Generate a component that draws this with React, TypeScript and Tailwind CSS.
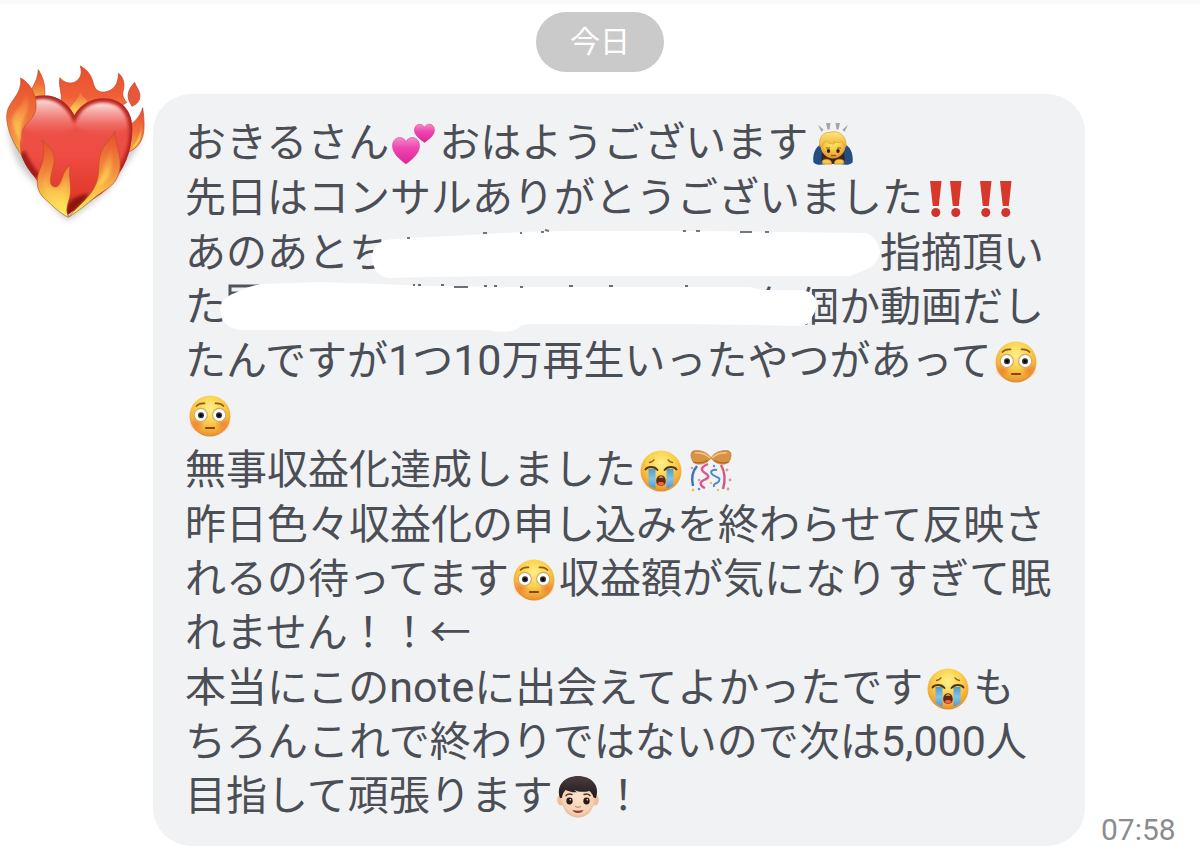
import type { ReactNode } from "react";

const EMOJI = "inline-block h-[42px] w-[50px] align-[-8px]";

function SharedGradients() {
  return (
    <svg width="0" height="0" className="absolute" aria-hidden="true">
      <defs>
        <radialGradient id="face" cx="50%" cy="32%" r="68%">
          <stop offset="0" stopColor="#fff08a" />
          <stop offset="0.5" stopColor="#fbcf4a" />
          <stop offset="0.85" stopColor="#f0a437" />
          <stop offset="1" stopColor="#dd8c34" />
        </radialGradient>
        <radialGradient id="cheek">
          <stop offset="0" stopColor="#ee6a2c" stopOpacity="0.6" />
          <stop offset="1" stopColor="#ee6a2c" stopOpacity="0" />
        </radialGradient>
        <linearGradient id="pink" x1="0" y1="0" x2="0" y2="1">
          <stop offset="0" stopColor="#f48cc9" />
          <stop offset="0.4" stopColor="#ef45b0" />
          <stop offset="1" stopColor="#dc2597" />
        </linearGradient>
        <linearGradient id="tears" x1="0" y1="0" x2="0" y2="1">
          <stop offset="0" stopColor="#4d9dd0" />
          <stop offset="0.5" stopColor="#83c3e8" />
          <stop offset="1" stopColor="#4b98cf" />
        </linearGradient>
        <radialGradient id="skin" cx="50%" cy="45%" r="60%">
          <stop offset="0" stopColor="#fbe3cc" />
          <stop offset="0.75" stopColor="#f5d1b4" />
          <stop offset="1" stopColor="#dfae8c" />
        </radialGradient>
        <linearGradient id="hair" x1="0" y1="0" x2="0" y2="1">
          <stop offset="0" stopColor="#4a3d40" />
          <stop offset="1" stopColor="#1f191b" />
        </linearGradient>
        <linearGradient id="blonde" x1="0" y1="0" x2="0" y2="1">
          <stop offset="0" stopColor="#ffe67c" />
          <stop offset="1" stopColor="#edb22f" />
        </linearGradient>
      </defs>
    </svg>
  );
}

function Flushed() {
  return (
    <svg viewBox="0 0 48 42" className={EMOJI} role="img" aria-label="😳">
      <circle cx="24" cy="21" r="20.5" fill="url(#face)" />
      <circle cx="11" cy="29" r="8" fill="url(#cheek)" />
      <circle cx="37" cy="29" r="8" fill="url(#cheek)" />
      <path d="M10.500 11c2-2.200 5-3 8-2.600M37.500 11c-2-2.200-5-3-8-2.600" fill="none" stroke="#8a5a1a" strokeWidth="1.700" strokeLinecap="round" />
      <circle cx="14.800" cy="20" r="6.600" fill="#fff" stroke="#cfa968" strokeWidth="1.200" />
      <circle cx="33.200" cy="20" r="6.600" fill="#fff" stroke="#cfa968" strokeWidth="1.200" />
      <circle cx="15" cy="20.300" r="3" fill="#32302f" />
      <circle cx="33" cy="20.300" r="3" fill="#32302f" />
      <circle cx="15" cy="20.300" r="1.500" fill="#080808" />
      <circle cx="33" cy="20.300" r="1.500" fill="#080808" />
      <path d="M20 33h8" stroke="#874514" strokeWidth="2.200" strokeLinecap="round" />
    </svg>
  );
}

function Crying() {
  return (
    <svg viewBox="0 0 48 42" className={EMOJI} role="img" aria-label="😭">
      <circle cx="24" cy="21" r="20.500" fill="url(#face)" />
      <path d="M11.500 19h7v19.800q-3.800-1.200-7-4zM36.500 19h-7v19.800q3.800-1.200 7-4z" fill="url(#tears)" />
      <path d="M12.500 12.500c1.600-.3 3.500-1.300 4.500-2.700M35.500 12.500c-1.600-.3-3.500-1.300-4.500-2.700" fill="none" stroke="#8f5c18" strokeWidth="1.300" strokeLinecap="round" />
      <path d="M8.500 19.500c2.200-3.200 9-3.500 12 .5M39.500 19.500c-2.200-3.200-9-3.500-12 .5" fill="none" stroke="#513414" strokeWidth="1.900" strokeLinecap="round" />
      <path d="M24 25.200c3 0 4.800 2.800 4.800 6 0 3-2 4.600-4.800 4.600s-4.800-1.600-4.800-4.600c0-3.200 1.800-6 4.800-6z" fill="#622812" />
      <path d="M20.500 33.500c1-2 6-2 7 0-.8 1.300-2 1.900-3.500 1.900s-2.700-.6-3.500-1.900z" fill="#ef6250" />
      <path d="M21.300 27.500q2.700-2 5.400 0z" fill="#fff" />
    </svg>
  );
}

function TwoHearts() {
  return (
    <svg viewBox="0 0 48 42" className={EMOJI} role="img" aria-label="💕">
      <path d="M16 41C10 36.500 2.500 30.500 2.500 23c0-5 3.300-8.500 7.200-8.500 3.100 0 5.300 1.900 6.300 4.300 1-2.400 3.400-4.300 6.500-4.300 4 0 7 3.600 7 8.300C29.500 30.500 22 36.500 16 41z" fill="url(#pink)" stroke="#cf2893" strokeWidth="0.500" />
      <path d="M34.600 19.500C30 16 24.500 12.600 24.500 7.200c0-3.400 2.100-6 4.900-6 2.500 0 4.200 1.300 5 3.300.9-2 2.700-3.300 5-3.300 2.900 0 5 2.600 5 5.800 0 5.600-5.300 9-9.800 12.500z" fill="url(#pink)" stroke="#cf2893" strokeWidth="0.500" />
    </svg>
  );
}

function Bowing() {
  return (
    <svg viewBox="0 0 48 42" className={EMOJI} role="img" aria-label="🙇">
      <path d="M9 2l5.500 4.500-2 2.500zM17 0h4.500l-1 6.500h-2zM26.500 0H31l-1.500 6.500h-2zM39 2l-5.500 4.500 2 2.500z" fill="#a3a6aa" />
      <path d="M11 22C5.500 25 3.500 33 4.500 39.500c3 3 8 2.500 12 1.500h15c4 1 9 1.500 12-1.500 1-6.500-1-14.500-6.500-17.500z" fill="#234e83" />
      <path d="M13 29c4 7 18 7 22 0l1 9-12 3-12-3z" fill="#342719" />
      <ellipse cx="24" cy="22" rx="12.500" ry="13.500" fill="url(#face)" />
      <path d="M11 24C9 15 14 8.500 21 9.500c8-3 17.500 3 16 14.500-2-1.500-2.600-3.500-3.500-5.500-3 1.500-6 1.500-8.800.2 1 1 1 1.700.5 2.300-4.500-.2-7.500-1.400-9-3-1 2.500-2.500 4.500-5.200 6z" fill="url(#blonde)" stroke="#d89b29" strokeWidth="0.600" />
      <path d="M17 25h4M28 25h4" stroke="#8b5517" strokeWidth="1" />
      <ellipse cx="19.500" cy="28" rx="1.700" ry="1.900" fill="#33210f" />
      <ellipse cx="29" cy="28" rx="1.700" ry="1.900" fill="#33210f" />
      <path d="M22 32.500h5" stroke="#9a4e1e" strokeWidth="1.300" />
      <path d="M13 38c2-2.500 7-2.500 9 0l1 3H13.500zM35 38c-2-2.500-7-2.500-9 0l-1 3h9.500z" fill="#f6c64a" stroke="#b77921" strokeWidth="0.700" />
    </svg>
  );
}

function DoubleBang() {
  return (
    <svg viewBox="0 0 48 42" className={EMOJI} role="img" aria-label="‼️">
      <path d="M6 3h11.500l-2.700 25H8.800zM26 3h11.500l-2.700 25h-6z" fill="#d8382a" />
      <circle cx="11.800" cy="34.500" r="4.500" fill="#cf352a" />
      <circle cx="31.800" cy="34.500" r="4.500" fill="#cf352a" />
    </svg>
  );
}

function Confetti() {
  return (
    <svg viewBox="0 0 48 42" className={EMOJI} role="img" aria-label="🎊">
      <path d="M24 8C21 2 12-.5 6 1 2.500 3 4 9 6.500 12.500 12 16 20 14 24 8z" fill="#d99146" stroke="#b97330" strokeWidth="0.600" />
      <path d="M24 8C27 2 36-.5 42 1c3.500 2 2 8-.5 11.500C36 16 28 14 24 8z" fill="#d99146" stroke="#b97330" strokeWidth="0.600" />
      <path d="M8 3c5-.5 11 1 15 5M40 3c-5-.5-11 1-15 5" fill="none" stroke="#f2c17e" strokeWidth="1.600" />
      <path d="M6.500 12c5 1.500 10 1 14-1.500M41.500 12c-5 1.500-10 1-14-1.500" fill="none" stroke="#a8662a" strokeWidth="1.300" />
      <path d="M10 16C5 22 4 28 6 36" fill="none" stroke="#3f6fb8" strokeWidth="2.400" />
      <path d="M21 14c-7 3-8 6-3 9s4 5-1 7-4 6 1 8" fill="none" stroke="#d9578c" strokeWidth="2.400" />
      <path d="M30 20c-5-1-8 2-4 5s8 2 6 6-6 1-5 6" fill="none" stroke="#4d85c9" strokeWidth="1.900" />
      <path d="M34 15c4 7 5 14 2 24" fill="none" stroke="#cf5b75" strokeWidth="2.400" />
      <g fill="#e58fae">
        <circle cx="5" cy="18" r="1.300" />
        <circle cx="40" cy="20" r="1.400" />
        <circle cx="43" cy="30" r="1.400" />
        <circle cx="12" cy="30" r="1.300" />
        <circle cx="41" cy="39" r="1.400" />
      </g>
      <g fill="#e9c44f">
        <circle cx="6" cy="40" r="1.400" />
        <circle cx="24" cy="33" r="1.200" />
        <circle cx="31" cy="40" r="1.200" />
      </g>
      <circle cx="12" cy="39" r="1.300" fill="#5b8fce" />
      <circle cx="27" cy="16" r="1.200" fill="#5b8fce" />
    </svg>
  );
}

function Boy() {
  return (
    <svg viewBox="0 0 48 42" className={EMOJI} role="img" aria-label="👦🏻">
      <ellipse cx="7" cy="24" rx="3.800" ry="5.500" fill="#eebf9c" />
      <ellipse cx="41" cy="24" rx="3.800" ry="5.500" fill="#eebf9c" />
      <path d="M7 18C7 7 14 3 24 3s17 4 17 15c0 14-6 23.500-17 23.500S7 32 7 18z" fill="url(#skin)" />
      <path d="M6 22C1.500 9 11 0 24 0s22.500 9 18 22l-2.500-.5c-.5-3-2-4.500-4-6.500-6 1.500-11 1-15-1 1 1.200 1.500 1.600 2.500 2.300-5 .2-9-1-11.500-2.300-1.800 2-3.500 5-3.500 7.800z" fill="url(#hair)" />
      <path d="M12 19.500c1.500-1.500 4-1.800 6-1M36 19.500c-1.500-1.500-4-1.800-6-1" fill="none" stroke="#4b332b" strokeWidth="1.400" strokeLinecap="round" />
      <ellipse cx="15.500" cy="25" rx="3.200" ry="3.400" fill="#2a1a15" />
      <ellipse cx="32.500" cy="25" rx="3.200" ry="3.400" fill="#2a1a15" />
      <circle cx="16.300" cy="23.800" r="0.800" fill="#fff" />
      <circle cx="33.300" cy="23.800" r="0.800" fill="#fff" />
      <path d="M21.500 30.500q2.500 1.500 5 0" fill="none" stroke="#d09474" strokeWidth="1.300" strokeLinecap="round" />
      <path d="M18.500 34q5.500 1.500 11 0c-1 4-10 4-11 0z" fill="#98362f" />
    </svg>
  );
}

function HeartOnFire() {
  return (
    <svg viewBox="0 42 459 528" className="block h-44 w-full" role="img" aria-label="❤️‍🔥">
      <defs>
        <linearGradient id="flame" x1="0" y1="0" x2="0" y2="1">
          <stop offset="0" stopColor="#ea4d2c" />
          <stop offset="0.5" stopColor="#f0703a" />
          <stop offset="1" stopColor="#f8b347" />
        </linearGradient>
        <linearGradient id="crown" x1="0" y1="0" x2="0" y2="1">
          <stop offset="0" stopColor="#ea4d2c" />
          <stop offset="0.6" stopColor="#ef6038" />
          <stop offset="1" stopColor="#f4934a" />
        </linearGradient>
        <linearGradient id="glow" x1="0" y1="0" x2="0" y2="1">
          <stop offset="0" stopColor="#f28a40" stopOpacity="0.3" />
          <stop offset="0.6" stopColor="#fbc451" />
          <stop offset="1" stopColor="#ffe95c" />
        </linearGradient>
        <linearGradient id="lowFlame" x1="0" y1="0" x2="0" y2="1">
          <stop offset="0" stopColor="#e84c2e" />
          <stop offset="0.45" stopColor="#f28a3e" />
          <stop offset="0.8" stopColor="#fad54d" />
          <stop offset="1" stopColor="#fdf06a" />
        </linearGradient>
        <linearGradient id="heart" x1="0" y1="0" x2="0" y2="1">
          <stop offset="0" stopColor="#e8564c" />
          <stop offset="0.5" stopColor="#ef4c42" />
          <stop offset="0.8" stopColor="#e23a2c" />
          <stop offset="1" stopColor="#b01e12" />
        </linearGradient>
        <linearGradient id="shine" x1="0" y1="0" x2="0" y2="1">
          <stop offset="0" stopColor="#fff" stopOpacity="0.85" />
          <stop offset="0.45" stopColor="#fbc9c8" stopOpacity="0.5" />
          <stop offset="1" stopColor="#f4918c" stopOpacity="0" />
        </linearGradient>
        <filter id="soft" x="-10%" y="-10%" width="120%" height="125%">
          <feGaussianBlur stdDeviation="9" />
        </filter>
        <filter id="edge" x="-20%" y="-20%" width="140%" height="140%">
          <feGaussianBlur stdDeviation="4" />
        </filter>
        <clipPath id="heartShape">
          <path d="M206 498C170 450 125 420 103 380 70 345 45 290 55 220c5-50 27-84 75-84 45 0 75 24 93 60 20-34 50-51 88-51 57 0 90 43 86 101-4 66-25 110-62 156-37 45-90 60-137 96z" />
        </clipPath>
      </defs>
      <path d="M25 230C35 330 75 370 108 400c25 45 60 85 97 112 55-45 130-85 160-150 35-50 60-80 55-110z" fill="#777" opacity="0.4" filter="url(#soft)" />
      <g stroke="#b5452c" strokeWidth="2">
        <path d="M88 150c-4-30 25-48 27-91 12 20 22 42 19 78z" fill="url(#flame)" />
        <path d="M180 200c-8-30 10-45 2-75-2-16-6-28-2-42 12 16 35 22 51 9 15-13 14-28 10-44 22 12 32 28 38 48 5 24 17 32 35 30 28-4 42-25 41-56 16 12 20 32 15 50-5 19 2 26 10 38L300 200z" fill="url(#crown)" />
        <path d="M404 97c-22 24-27 44-8 72 22-8 29-28 20-48-5-10-10-16-12-24z" fill="#e9573a" />
        <path d="M390 225c16-12 30-25 38-52 5 38 8 73-4 97-10 22-26 32-47 39z" fill="url(#flame)" />
      </g>
      <path d="M201 190c8-25 36-35 39-66 9 22 24 25 26 41l-25 45h-35z" fill="url(#glow)" />
      <g clipPath="url(#heartShape)">
        <path d="M30 120h390v390H30z" fill="url(#heart)" />
        <path d="M78 172C92 140 150 134 184 164c24 20 36 42 38 70-40 26-120 26-150 0z" fill="url(#shine)" filter="url(#edge)" />
        <path d="M226 226c8-50 50-70 90-68 44 2 68 34 66 76-34 28-116 26-156-8z" fill="url(#shine)" filter="url(#edge)" />
        <path d="M100 140c62-12 103 20 123 58 19-35 47-53 88-53 57 0 87 41 86 100-2 50-17 87-37 118" fill="none" stroke="#a01214" strokeWidth="18" opacity="0.75" filter="url(#edge)" />
        <path d="M60 310c12 28 25 51 48 75" fill="none" stroke="#850e09" strokeWidth="34" opacity="0.7" filter="url(#edge)" />
        <path d="M196 500c0-43 23-62 69-69-10 27-35 37-55 69z" fill="#8f120a" filter="url(#edge)" />
      </g>
      <g stroke="#b4512a" strokeWidth="2">
        <path d="M64 314C34 274 12 215 23 180c12-34 43-49 39-96 29 15 49 52 46 89-3 36-35 44-42 72-6 24-5 45-2 69z" fill="url(#flame)" />
        <path d="M206 502c-25-9-49-37-70-54-26-22-30-54-18-86 13-33 18-53 8-91 30 19 43 44 34 78-9 32-13 55-1 60 29 13 24-52 52-61-7 32 6 63-2 94-6 24-14 37-3 60z" fill="url(#lowFlame)" />
        <path d="M208 500c17-24 35-36 53-57 44-48 31-81 38-119 6-42 33-51 46-81 1 43 20 75 15 111-8 55-47 65-73 86-31 26-49 41-79 60z" fill="url(#lowFlame)" />
      </g>
      <path d="M63 280C45 240 28 217 42 193c11-21 30-27 36-63 19 42-4 67-12 91-8 23-5 37-3 59z" fill="url(#glow)" opacity="0.8" filter="url(#edge)" />
      <path d="M197 475c-31-12-71-40-67-77 2-19 16-35 19-57 5 27-16 61 8 75 31 13 38-22 44-39 7 38-13 61-4 98z" fill="url(#glow)" opacity="0.85" filter="url(#edge)" />
      <path d="M287 414c27-28 17-77 49-119 3 51 5 91-49 119z" fill="url(#glow)" opacity="0.85" filter="url(#edge)" />
      <path d="M396 295c14-20 25-37 27-74 5 37-3 58-27 74z" fill="url(#glow)" />
    </svg>
  );
}

function ScribbleTop() {
  return (
    <span className="relative inline-block h-10 w-[490px] align-[-8px]">
      <svg viewBox="370 228 520 56" width="520" height="56" className="absolute -top-2 -left-5 max-w-none" aria-hidden="true">
        <path d="M372 260Q371 247 385 241L410 239L470 236Q530 232 570 232L690 232L867 234Q878 239 880 253Q879 265 865 271L850 277H500L430 278L388 279Q374 276 372 260Z" fill="#fff" />
        <path d="M407 239h3M483 234h4M520 234h2M541 233h3M545 231l4 1M683 232h3M696 232h4M740 233h12M765 233h4" stroke="#53565c" strokeWidth="2" opacity="0.8" />
      </svg>
    </span>
  );
}

function ScribbleBottom() {
  return (
    <span className="relative inline-block h-10 w-[531px] align-[-8px]">
      <svg viewBox="216 278 610 60" width="610" height="60" className="absolute -top-3 -left-2.5 max-w-none" aria-hidden="true">
        <path d="M230 301V287H259M231 294H248" fill="none" stroke="#50545b" strokeWidth="3" />
        <path d="M220 310Q221 299 235 294Q248 287 262 285L320 283L380 285L425 287L520 288H680L750 288L762 291H803Q816 294 817 306Q815 315 811 319Q808 327 800 327L755 326L680 325H528Q521 326 517 330Q506 335 488 331L240 331Q221 328 220 310Z" fill="#fff" />
        <path d="M413 286h2M418 286h3M441 286h3M454 288h14M484 287h3M494 287h3M520 288h3M569 287h4M609 287h4M685 287h3" stroke="#53565c" strokeWidth="2" opacity="0.85" />
      </svg>
    </span>
  );
}

function Line({ children }: { children: ReactNode }) {
  return <span className="block whitespace-nowrap">{children}</span>;
}

function Latin({ children }: { children: ReactNode }) {
  return <span className="text-[43px] leading-none">{children}</span>;
}

export default function App() {
  return (
    <main className="min-h-screen overflow-x-hidden border-t-4 border-[#f9f9fa] bg-white font-[Roboto,'Noto_Sans_CJK_JP',sans-serif]">
      <SharedGradients />
      <header className="flex justify-center pt-2">
        <time className="rounded-full bg-[#cacaca] px-[34px] text-[30px] leading-[60px] text-white">今日</time>
      </header>
      <article className="-mt-2 flex">
        <div className="w-[153px] shrink-0">
          <HeartOnFire />
        </div>
        <div className="mt-[30px] min-w-0 flex-1 space-y-px rounded-[38px] bg-[#f1f2f4] pt-[22px] pr-3 pb-[23px] pl-8 text-[41px] leading-[54px] text-[#4b4e54]">
          <p>
            <Line>おきるさん<TwoHearts />おはようございます<Bowing /></Line>
          </p>
          <p>
            <Line>先日はコンサルありがとうございました<DoubleBang /><DoubleBang /></Line>
          </p>
          <p>
            <Line>あのあとち<ScribbleTop />指摘頂い</Line>
            <Line>た<ScribbleBottom />何個か動画だし</Line>
            <Line>たんですが<Latin>1</Latin>つ<Latin>10</Latin>万再生いったやつがあって<Flushed /></Line>
            <Line><Flushed /></Line>
          </p>
          <p>
            <Line>無事収益化達成しました<Crying /><Confetti /></Line>
          </p>
          <p>
            <Line>昨日色々収益化の申し込みを終わらせて反映さ</Line>
            <Line>れるの待ってます<Flushed />収益額が気になりすぎて眠</Line>
            <Line>れません！！←</Line>
          </p>
          <p>
            <Line>本当にこの<Latin>note</Latin>に出会えてよかったです<Crying />も</Line>
            <Line>ちろんこれで終わりではないので次は<Latin>5,000</Latin>人</Line>
            <Line>目指して頑張ります<Boy />！</Line>
          </p>
        </div>
        <time className="w-[115px] shrink-0 self-end pl-4 text-[30px] leading-8 text-[#8b8c8f]">07:58</time>
      </article>
    </main>
  );
}
